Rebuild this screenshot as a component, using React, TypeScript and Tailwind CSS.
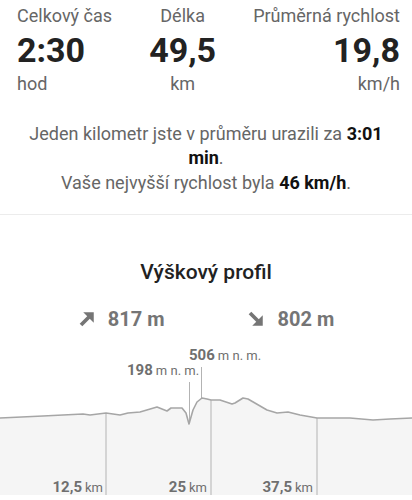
import React from 'react';

type Stat = { label: string; value: string; unit: string; align: 'left' | 'center' | 'right' };

const stats: Stat[] = [
  { label: 'Celkový čas', value: '2:30', unit: 'hod', align: 'left' },
  { label: 'Délka', value: '49,5', unit: 'km', align: 'center' },
  { label: 'Průměrná rychlost', value: '19,8', unit: 'km/h', align: 'right' },
];

const profile: [number, number][] = [
  [0, 83], [43, 81], [83, 79], [90, 80], [106, 78], [120, 80], [128, 78], [140, 77],
  [157, 72], [167, 76], [171, 73], [182, 73], [186, 78], [189, 89], [193, 75], [197, 67],
  [202, 63], [207, 64], [211, 65], [220, 65], [232, 69], [235, 68], [243, 63], [248, 64],
  [267, 75], [277, 78], [288, 77], [300, 80], [317, 83], [333, 83], [350, 83], [373, 85],
  [390, 84], [412, 83],
];

const linePath = profile.map(([x, y], i) => `${i === 0 ? 'M' : 'L'}${x} ${y}`).join(' ');
const areaPath = `${linePath} L412 160 L0 160 Z`;

function ArrowUp() {
  return (
    <svg width="18" height="18" viewBox="0 0 24 24" className="shrink-0">
      <polygon points="21,3 21,17 7,3" fill="#757575" />
      <line x1="4" y1="20" x2="15" y2="9" stroke="#757575" strokeWidth="5" />
    </svg>
  );
}

function ArrowDown() {
  return (
    <svg width="18" height="18" viewBox="0 0 24 24" className="shrink-0">
      <polygon points="21,21 21,7 7,21" fill="#757575" />
      <line x1="4" y1="4" x2="15" y2="15" stroke="#757575" strokeWidth="5" />
    </svg>
  );
}

function AxisLabel({ left, value }: { left: number; value: string }) {
  return (
    <div className="absolute top-[141px] flex items-baseline gap-[3px] text-[#6f6f6f]" style={{ right: 412 - left }}>
      <span className="text-[15px] font-bold">{value}</span>
      <span className="text-[13px]">km</span>
    </div>
  );
}

export default function App() {
  return (
    <div className="w-[412px] h-[500px] overflow-hidden bg-white font-['Roboto',sans-serif]">
      {/* Stats */}
      <div className="flex justify-between pl-[17px] pr-[12px] pt-[5px]">
        {stats.map((s) => (
          <div
            key={s.label}
            className={`flex flex-col ${
              s.align === 'left' ? 'items-start' : s.align === 'center' ? 'items-center' : 'items-end'
            }`}
          >
            <span className="text-[18px] leading-[22px] text-[#666]">{s.label}</span>
            <span className="mt-[3px] text-[34px] leading-[40px] font-bold text-[#222]">{s.value}</span>
            <span className="mt-[3px] text-[18px] leading-[22px] text-[#666]">{s.unit}</span>
          </div>
        ))}
      </div>

      {/* Pace text */}
      <div className="px-6 pt-[27px] text-center text-[18px] leading-[24px] text-[#666]">
        <p>
          Jeden kilometr jste v průměru urazili za <b className="text-[#111]">3:01</b>{' '}
          <b className="text-[#111]">min</b>.
        </p>
        <p className="mt-[1px]">
          Vaše nejvyšší rychlost byla <b className="text-[#111]">46 km/h</b>.
        </p>
      </div>

      <div className="mt-[19px] h-px bg-[#ececec]" />

      {/* Elevation */}
      <h2 className="mt-[44px] text-center text-[21px] leading-[26px] font-medium text-[#222]">Výškový profil</h2>

      <div className="mt-[22px] flex justify-center gap-[82px] text-[#757575]">
        <div className="flex items-center gap-[12px]">
          <ArrowUp />
          <span className="text-[20px] leading-[24px] font-bold">817 m</span>
        </div>
        <div className="flex items-center gap-[13px]">
          <ArrowDown />
          <span className="text-[20px] leading-[24px] font-bold">802 m</span>
        </div>
      </div>

      {/* Chart */}
      <div className="relative mt-[4px] h-[160px]">
        <svg width="412" height="160" viewBox="0 0 412 160" className="absolute inset-0">
          <path d={areaPath} fill="#f5f5f5" />
          <line x1="106" y1="78" x2="106" y2="160" stroke="#b3b3b3" strokeWidth="1" />
          <line x1="211" y1="65" x2="211" y2="160" stroke="#b3b3b3" strokeWidth="1" />
          <line x1="317" y1="83" x2="317" y2="160" stroke="#b3b3b3" strokeWidth="1" />
          <line x1="189.5" y1="47" x2="189.5" y2="88" stroke="#b3b3b3" strokeWidth="1" />
          <line x1="201.5" y1="32" x2="201.5" y2="63" stroke="#b3b3b3" strokeWidth="1" />
          <path d={linePath} fill="none" stroke="#a6a6a6" strokeWidth="1.6" strokeLinejoin="round" />
        </svg>

        <div className="absolute left-[127px] top-[24px] flex items-baseline gap-[3px] text-[#6f6f6f]">
          <span className="text-[15px] font-bold">198</span>
          <span className="text-[13px]">m n. m.</span>
        </div>
        <div className="absolute left-[189px] top-[9px] flex items-baseline gap-[3px] text-[#6f6f6f]">
          <span className="text-[15px] font-bold">506</span>
          <span className="text-[13px]">m n. m.</span>
        </div>

        <AxisLabel left={103} value="12,5" />
        <AxisLabel left={207} value="25" />
        <AxisLabel left={313} value="37,5" />
      </div>
    </div>
  );
}
